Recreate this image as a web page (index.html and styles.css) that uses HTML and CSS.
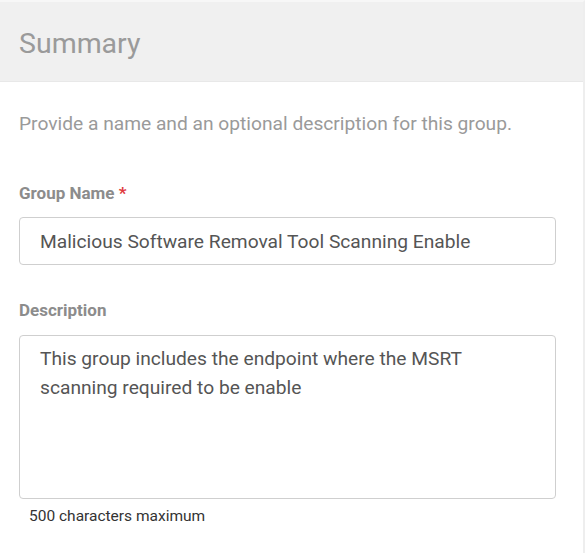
FILE: index.html
```html
<!DOCTYPE html>
<html>
<head>
<meta charset="utf-8">
<link rel="stylesheet" href="styles.css">
</head>
<body>
<div class="panel">
  <div class="header"><h1 class="title">Summary</h1></div>
  <div class="body">
    <p class="intro">Provide a name and an optional description for this group.</p>
    <div class="field first">
      <label class="label">Group Name <span class="req">*</span></label>
      <div class="input">Malicious Software Removal Tool Scanning Enable</div>
    </div>
    <div class="field">
      <label class="label">Description</label>
      <div class="textarea">This group includes the endpoint where the MSRT scanning required to be enable</div>
      <div class="hint">500 characters maximum</div>
    </div>
  </div>
</div>
</body>
</html>
```

FILE: styles.css
```css
html, body {
  margin: 0;
  padding: 0;
  background: #ffffff;
  font-family: Roboto, "Liberation Sans", sans-serif;
}
.panel {
  width: 585px;
  height: 553px;
  border-right: 2px solid #eeeeee;
  border-top: 2px solid #f7f7f7;
  box-sizing: border-box;
}
.header {
  background: #f0f0f0;
  height: 80px;
  border-bottom: 1px solid #e8e8e8;
  padding: 4px 19px 0;
  box-sizing: border-box;
  display: flex;
  align-items: center;
}
.title {
  margin: 0;
  font-size: 28.5px;
  font-weight: 400;
  color: #9a9a9a;
}
.body {
  padding: 0 27px 0 19px;
}
.intro {
  margin: 27px 0 0;
  font-size: 19.2px;
  color: #9a9a9a;
  line-height: 30px;
}
.field {
  margin-top: 35px;
}
.field.first {
  margin-top: 44px;
}
.label {
  display: block;
  font-size: 17px;
  line-height: 20px;
  font-weight: 700;
  color: #8c8c8c;
  margin-bottom: 14px;
}
.field + .field .label {
  margin-bottom: 15px;
}
.req { color: #e0393e; }
.input {
  height: 48px;
  box-sizing: border-box;
  border: 1px solid #cfcfcf;
  border-radius: 4px;
  padding: 0 20px;
  display: flex;
  align-items: center;
  font-size: 19.2px;
  color: #555555;
}
.textarea {
  height: 164px;
  box-sizing: border-box;
  border: 1px solid #cfcfcf;
  border-radius: 4px;
  padding: 8px 20px;
  font-size: 19.2px;
  line-height: 29px;
  color: #555555;
}
.hint {
  margin-top: 8px;
  padding-left: 10px;
  font-size: 15.5px;
  line-height: 18px;
  color: #333333;
}
```
